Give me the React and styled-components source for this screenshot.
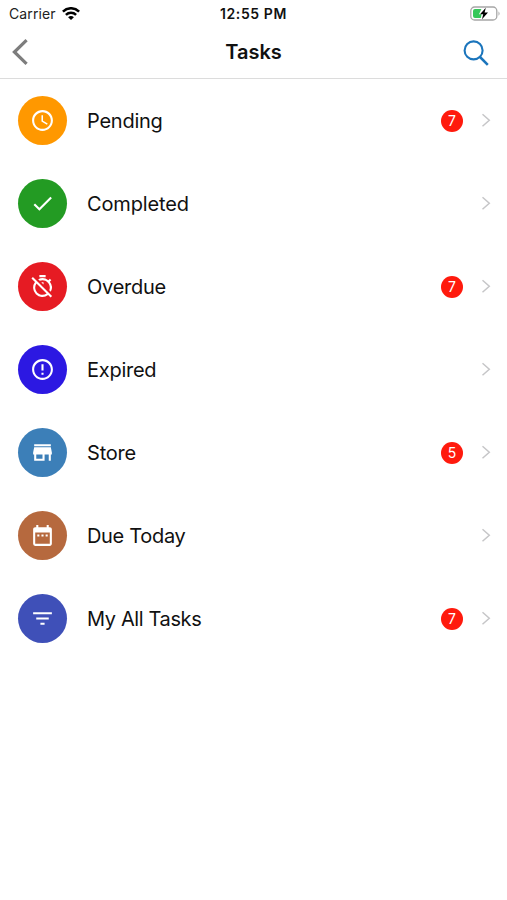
import React from 'react'
import styled, { createGlobalStyle } from 'styled-components'
import {
    MdAccessTime,
    MdCheck,
    MdOutlineTimerOff,
    MdErrorOutline,
    MdStore,
    MdDateRange,
    MdFilterList
} from 'react-icons/md'

const GlobalStyle = createGlobalStyle`
    * {
        box-sizing: border-box;
    }
    body {
        margin: 0;
        background: #fff;
        color: #111;
        font-family: Inter, "Liberation Sans", sans-serif;
    }
`

const Screen = styled.div`
    min-height: 900px;
    overflow: hidden;
    background: #fff;
`

const StatusBar = styled.div`
    display: grid;
    grid-template-columns: 1fr auto 1fr;
    align-items: center;
    height: 27px;
    padding: 0 6px;
`

const Carrier = styled.div`
    display: flex;
    align-items: center;
    gap: 6px;
    padding-left: 3px;
    font-size: 14px;
    letter-spacing: 0.1px;
    color: #222;
`

const Clock = styled.div`
    font-size: 14px;
    font-weight: 600;
    letter-spacing: 0.6px;
`

const Battery = styled.svg`
    justify-self: end;
`

const Header = styled.header`
    display: grid;
    grid-template-columns: 1fr auto 1fr;
    align-items: center;
    height: 52px;
    padding: 0 11px 2px;
    border-bottom: 1px solid #dcdcdc;
`

const Title = styled.h1`
    margin: 0;
    font-size: 20px;
    font-weight: 600;
    letter-spacing: 0;
`

const SearchIcon = styled.svg`
    justify-self: end;
    margin: 3px 7px 0 0;
`

const List = styled.ul`
    margin: 0;
    padding: 0;
    list-style: none;
`

const Row = styled.li`
    display: flex;
    align-items: center;
    height: 83px;
    padding: 0 16px 0 18px;
`

const IconCircle = styled.div`
    display: flex;
    align-items: center;
    justify-content: center;
    width: 49px;
    height: 49px;
    margin-right: 20px;
    border-radius: 50%;
    background: ${props => props.$color};
    color: #fff;
    font-size: 25px;
`

const Label = styled.span`
    flex: 1;
    font-size: 20px;
    letter-spacing: ${props => props.$spacing}px;
`

const Badge = styled.span`
    display: flex;
    align-items: center;
    justify-content: center;
    width: 22px;
    height: 22px;
    margin-right: 18px;
    border-radius: 50%;
    background: #ff1a0d;
    color: #fff;
    font-size: 14px;
`

const tasks = [
    { label: 'Pending', color: '#ff9800', icon: MdAccessTime, spacing: -0.25, count: 7 },
    { label: 'Completed', color: '#239b23', icon: MdCheck, spacing: -0.13 },
    { label: 'Overdue', color: '#e61b23', icon: MdOutlineTimerOff, spacing: -0.25, count: 7 },
    { label: 'Expired', color: '#2c18e2', icon: MdErrorOutline, spacing: -0.27 },
    { label: 'Store', color: '#3c7fb8', icon: MdStore, spacing: -0.2, count: 5 },
    { label: 'Due Today', color: '#b6693e', icon: MdDateRange, spacing: -0.32 },
    { label: 'My All Tasks', color: '#3f50b8', icon: MdFilterList, spacing: -0.38, count: 7 }
]

const TaskRow = ({ task }) => {
    const Icon = task.icon
    return (
        <Row>
            <IconCircle $color={task.color}><Icon /></IconCircle>
            <Label $spacing={task.spacing}>{task.label}</Label>
            {task.count && <Badge>{task.count}</Badge>}
            <svg width="10" height="16" viewBox="0 0 10 16" fill="none" stroke="#c6c6c8" strokeWidth="1.5">
                <path d="M1.5 1.2L8.3 7.2L1.5 13.2" />
            </svg>
        </Row>
    )
}

const App = () => (
    <Screen>
        <GlobalStyle />
        <StatusBar>
            <Carrier>
                Carrier
                <svg width="18" height="14" viewBox="0 0 18 14" fill="none" stroke="#000" strokeWidth="2.5">
                    <path d="M0.9 4.6C5.5 0.1 12.5 0.1 17.1 4.6" />
                    <path d="M3.9 7.9C6.8 5.1 11.2 5.1 14.1 7.9" />
                    <path d="M9 13.1L6.1 10.2C7.8 8.7 10.2 8.7 11.9 10.2Z" fill="#000" stroke="none" />
                </svg>
            </Carrier>
            <Clock>12:55 PM</Clock>
            <Battery width="31" height="15" viewBox="0 0 31 15">
                <rect x="0.8" y="1" width="26" height="13" rx="3.8" fill="none" stroke="#a6a6a6" strokeWidth="1.3" />
                <path d="M28.5 5.2Q30.6 7.5 28.5 9.8Z" fill="#a6a6a6" />
                <path d="M5 3H11.4L9 8.2H11.6L10.8 12H5Q3 12 3 10V5Q3 3 5 3Z" fill="#35c759" />
                <path d="M15.8 1.8L10 8.2H13.2L12 13.2L18 6.6H14.6Z" fill="#000" />
            </Battery>
        </StatusBar>
        <Header>
            <svg width="18" height="26" viewBox="0 0 18 26" fill="none" stroke="#7d7d7d" strokeWidth="3.2">
                <path d="M15.6 1.2L3.4 13L15.6 24.8" />
            </svg>
            <Title>Tasks</Title>
            <SearchIcon width="26" height="26" viewBox="0 0 26 26" fill="none" stroke="#1b75bc" strokeWidth="2.1">
                <circle cx="10.6" cy="10.4" r="9" />
                <path d="M17 17L24.8 24.8" strokeWidth="2.5" />
            </SearchIcon>
        </Header>
        <List>
            {tasks.map(task => <TaskRow key={task.label} task={task} />)}
        </List>
    </Screen>
)

export default App
